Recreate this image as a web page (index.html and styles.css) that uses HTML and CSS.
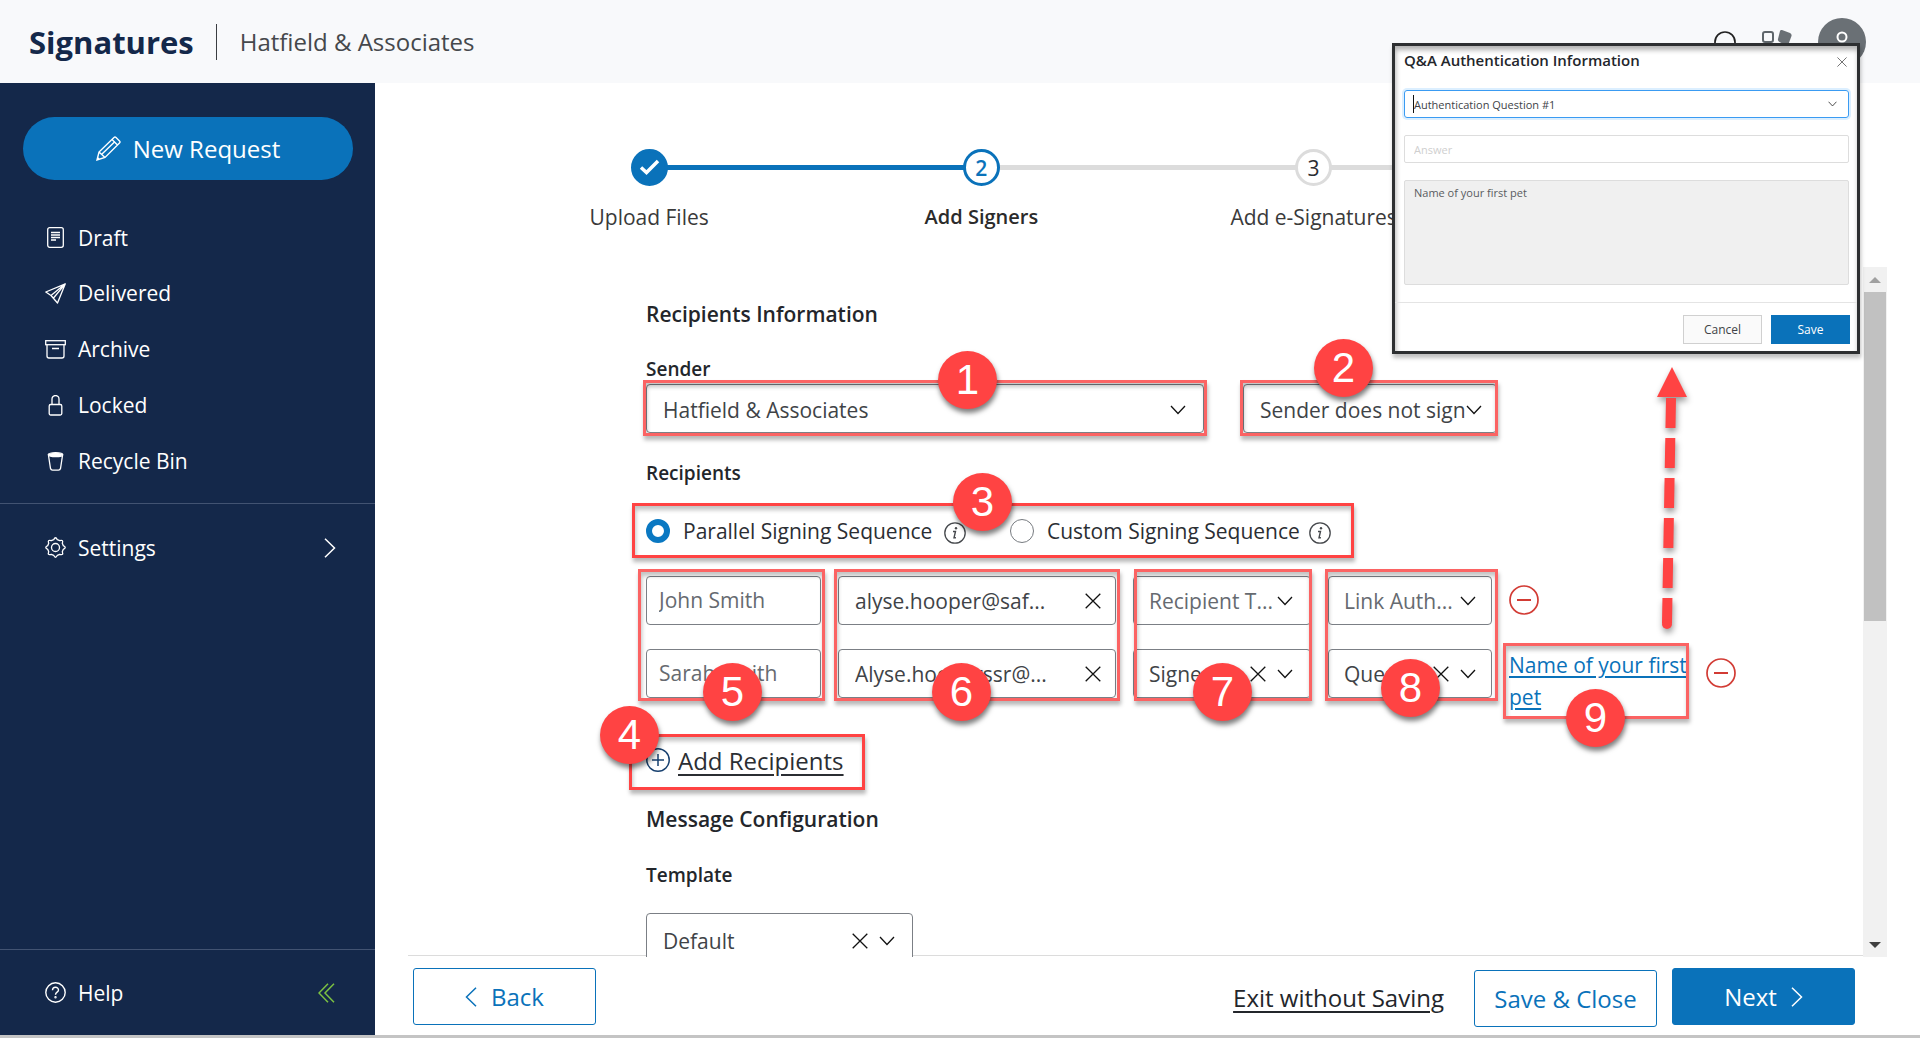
FILE: index.html
```
<!DOCTYPE html>
<html lang="en">
<head>
<meta charset="utf-8">
<title>Signatures - Add Signers</title>
<link rel="stylesheet" href="styles.css">
</head>
<body>
<svg class="defs" width="0" height="0" aria-hidden="true">
  <symbol id="chev" viewBox="0 0 16 10"><path d="M1 1l7 7.500 7-7.500" fill="none" stroke="currentColor" stroke-width="1.300"/></symbol>
  <symbol id="cross" viewBox="0 0 16 16"><path d="M.7.7l14.600 14.600M15.300.7L.7 15.300" fill="none" stroke="currentColor" stroke-width="1.300"/></symbol>
  <symbol id="info" viewBox="0 0 22 22"><circle cx="11" cy="11" r="10.200" fill="none" stroke="currentColor" stroke-width="1.300"/><circle cx="12" cy="6.200" r="1.200" fill="currentColor"/><path d="M9 9.500h2.500L10 15.800h1.900" fill="none" stroke="currentColor" stroke-width="1.400"/></symbol>
  <symbol id="minus" viewBox="0 0 30 30"><circle cx="15" cy="15" r="14" fill="none" stroke="currentColor" stroke-width="1.700"/><path d="M8 15h14" stroke="currentColor" stroke-width="2"/></symbol>
</svg>

<header class="topbar">
  <span class="brand">Signatures</span>
  <span class="account">Hatfield &amp; Associates</span>
  <div class="tools">
    <button class="tool" type="button" aria-label="Notifications"><svg width="24" height="22" viewBox="0 0 24 22" fill="none" stroke="#222" stroke-width="1.700"><path d="M2 18V11a10 10 0 0 1 20 0v7l2 3H0z"/></svg></button>
    <button class="tool" type="button" aria-label="Apps"><svg width="31" height="26" viewBox="0 0 31 26"><rect x="1" y="3" width="10" height="10" rx="2" fill="none" stroke="#5f666b" stroke-width="2"/><path d="M20 1l8 3q2 1 1.500 3l-3 8q-1 2-3 1l-6-3q-2-1-1.500-3l2-8q.5-1.500 2-1z" fill="#6a7075"/></svg></button>
    <button class="avatar" type="button" aria-label="Profile"><svg width="24" height="30" viewBox="0 0 24 30" fill="none" stroke="#fff" stroke-width="2"><circle cx="12" cy="10" r="4.500"/><path d="M3 27c0-12 18-12 18 0"/></svg></button>
  </div>
</header>

<div class="shell">
  <nav class="sidebar">
    <button class="new-request" type="button">
      <svg width="25" height="25" viewBox="0 0 25 25" fill="none" stroke="#fff" stroke-width="1.400"><path d="M1 24l2-8L18 1.500q1-1 2 0L23.500 5q1 1 0 2L9 21.500zM3 16l6 5.500M16 3.500l5.500 5.500M5.500 18.500L19 5.500M1.500 21.500l2 2"/></svg>
      New Request
    </button>
    <ul class="menu">
      <li><a href="#"><svg width="21" height="21" viewBox="0 0 21 21" fill="none" stroke="#fff" stroke-width="1.300"><rect x="2.700" y=".7" width="15.600" height="19.600" rx="2"/><path d="M6 5.500h9M6 8h9M6 10.500h9M6 13h5"/></svg>Draft</a></li>
      <li><a href="#"><svg width="21" height="21" viewBox="0 0 21 21" fill="none" stroke="#fff" stroke-width="1.300" stroke-linejoin="round"><path d="M20.300.8L.8 9l5.200 3.500 6.500 7.500zM20.300.8L6 12.500M20.300.8L8.500 15"/></svg>Delivered</a></li>
      <li><a href="#"><svg width="21" height="21" viewBox="0 0 21 21" fill="none" stroke="#fff" stroke-width="1.300"><rect x=".7" y="1.700" width="19.600" height="4"/><path d="M2 6v11q0 2 2 2h13q2 0 2-2V6M7 9.500h7"/></svg>Archive</a></li>
      <li><a href="#"><svg width="21" height="21" viewBox="0 0 21 21" fill="none" stroke="#fff" stroke-width="1.300"><rect x="4.200" y="9.500" width="12.600" height="10.500" rx="1.500"/><path d="M7 9.500V4a3.500 3.500 0 0 1 7 0v5.500"/></svg>Locked</a></li>
      <li><a href="#"><svg width="21" height="21" viewBox="0 0 21 21" fill="none" stroke="#fff" stroke-width="1.300"><ellipse cx="10.500" cy="3.700" rx="7.300" ry="2" fill="#fff"/><path d="M3.500 4.500l2 13q.4 1.600 2 1.600h6q1.600 0 2-1.600l2-13"/></svg>Recycle Bin</a></li>
    </ul>
    <ul class="menu menu-settings">
      <li><a href="#"><svg width="21" height="21" viewBox="0 0 21 21" fill="none" stroke="#fff" stroke-width="1.300" stroke-linejoin="round"><circle cx="10.500" cy="10.500" r="4"/><path d="M8.700 2.700Q10.500-1.200 12.300 2.700L14.700 3.700Q18.800 2.200 17.300 6.300L18.300 8.700Q22.200 10.500 18.300 12.300L17.300 14.700Q18.800 18.800 14.700 17.300L12.300 18.300Q10.500 22.200 8.700 18.300L6.300 17.300Q2.200 18.800 3.700 14.700L2.700 12.300Q-1.200 10.500 2.700 8.700L3.700 6.300Q2.200 2.200 6.300 3.700z"/></svg>Settings<svg class="end" width="12" height="20" viewBox="0 0 12 20" fill="none" stroke="#fff" stroke-width="1.500"><path d="M1 .7l9.500 9.300L1 19.300"/></svg></a></li>
    </ul>
    <div class="menu-help">
      <a href="#"><svg width="21" height="21" viewBox="0 0 21 21" fill="none" stroke="#fff" stroke-width="1.400"><circle cx="10.500" cy="10.500" r="9.700"/><path d="M7.500 8.300c0-4 6-4 6-.3 0 2.300-3 2-3 4.700"/><circle cx="10.500" cy="15.300" r=".5"/></svg>Help</a>
      <button type="button" class="collapse" aria-label="Collapse menu"><svg width="17" height="20" viewBox="0 0 17 20" fill="none" stroke="#7cc242" stroke-width="1.500"><path d="M10 .7L1 10l9 9.300M16 .7L7 10l9 9.300"/></svg></button>
    </div>
  </nav>

  <main class="main">
    <ol class="steps">
      <li class="step done"><span class="dot"><svg width="21" height="17" viewBox="0 0 21 17" fill="none" stroke="#fff" stroke-width="3.500"><path d="M2 8.500l5.500 5L19 2"/></svg></span><span class="label">Upload Files</span></li>
      <li class="step current"><span class="dot">2</span><span class="label">Add Signers</span></li>
      <li class="step"><span class="dot">3</span><span class="label">Add e-Signatures</span></li>
      <li class="step" aria-hidden="true"></li>
    </ol>

    <div class="scroller">
      <form class="form" id="request">
        <h2>Recipients Information</h2>
        <h3><label for="sender">Sender</label></h3>
        <div class="sender-row">
          <div class="field f-sender"><select id="sender"><option>Hatfield &amp; Associates</option></select><svg class="chev"><use href="#chev"/></svg></div>
          <div class="field f-sign"><select aria-label="Sender signing"><option>Sender does not sign</option></select><svg class="chev"><use href="#chev"/></svg></div>
        </div>
        <h3 class="recipients-title">Recipients</h3>
        <div class="sequence">
          <label class="choice"><input type="radio" name="seq" checked>Parallel Signing Sequence</label><svg class="info"><use href="#info"/></svg>
          <label class="choice second"><input type="radio" name="seq">Custom Signing Sequence</label><svg class="info"><use href="#info"/></svg>
        </div>
        <div class="recipient">
          <input class="field name" type="text" value="John Smith" aria-label="Recipient name">
          <div class="field email"><select aria-label="Recipient email"><option>alyse.hooper@saf...</option></select><button type="button" class="clear" aria-label="Clear"><svg><use href="#cross"/></svg></button></div>
          <div class="field type muted"><select aria-label="Recipient type"><option>Recipient T...</option></select><svg class="chev"><use href="#chev"/></svg></div>
          <div class="field auth muted"><select aria-label="Authentication"><option>Link Auth...</option></select><svg class="chev"><use href="#chev"/></svg></div>
          <button type="button" class="remove" aria-label="Remove recipient"><svg width="30" height="30"><use href="#minus"/></svg></button>
        </div>
        <div class="recipient">
          <input class="field name" type="text" value="Sarah Smith" aria-label="Recipient name">
          <div class="field email"><select aria-label="Recipient email"><option>Alyse.hooperssr@...</option></select><button type="button" class="clear" aria-label="Clear"><svg><use href="#cross"/></svg></button></div>
          <div class="field type"><select aria-label="Recipient type"><option>Signer</option></select><button type="button" class="clear" aria-label="Clear"><svg><use href="#cross"/></svg></button><svg class="chev"><use href="#chev"/></svg></div>
          <div class="field auth"><select aria-label="Authentication"><option>Quest...</option></select><button type="button" class="clear" aria-label="Clear"><svg><use href="#cross"/></svg></button><svg class="chev"><use href="#chev"/></svg></div>
          <a class="question" href="#">Name of your first pet</a>
          <button type="button" class="remove" aria-label="Remove recipient"><svg width="30" height="30"><use href="#minus"/></svg></button>
        </div>
        <button type="button" class="add"><svg width="24" height="24" viewBox="0 0 24 24" fill="none" stroke="#17406f" stroke-width="1.500"><circle cx="12" cy="12" r="11.200"/><path d="M6 12h12M12 6v12"/></svg><span>Add Recipients</span></button>
        <h2 class="message-title">Message Configuration</h2>
        <h3 class="template-title"><label for="template">Template</label></h3>
        <div class="field template"><select id="template"><option>Default</option></select><button type="button" class="clear" aria-label="Clear"><svg><use href="#cross"/></svg></button><svg class="chev"><use href="#chev"/></svg></div>
      </form>
      <div class="scrollbar" aria-hidden="true"><i class="up"></i><i class="thumb"></i><i class="down"></i></div>
    </div>

    <footer class="actions">
      <button class="btn" type="button"><svg width="12" height="20" viewBox="0 0 12 20"><path d="M11 .7L1.500 10l9.500 9.300"/></svg>Back</button>
      <a class="exit" href="#">Exit without Saving</a>
      <button class="btn low" type="button">Save &amp; Close</button>
      <button class="btn primary" type="button">Next<svg width="12" height="20" viewBox="0 0 12 20"><path d="M1 .7l9.500 9.300L1 19.300"/></svg></button>
    </footer>
  </main>
</div>

<div class="notes" aria-hidden="true">
  <div class="frame soft fr1"></div><div class="frame soft fr2"></div><div class="frame fr3"></div><div class="frame fr4"></div>
  <div class="frame soft fr5"></div><div class="frame soft fr6"></div><div class="frame soft fr7"></div><div class="frame soft fr8"></div><div class="frame soft fr9"></div>
  <svg class="arrow" width="40" height="272" viewBox="0 0 40 272"><path d="M22 0l15 30H7z" fill="#ff4343"/><path d="M21 31L17 256" fill="none" stroke="#ff4343" stroke-width="10" stroke-dasharray="30 10"/><circle cx="17" cy="257" r="5" fill="#ff4343"/></svg>
  <span class="badge b1">1</span><span class="badge b2">2</span><span class="badge b3">3</span><span class="badge b4">4</span><span class="badge b5">5</span><span class="badge b6">6</span><span class="badge b7">7</span><span class="badge b8">8</span><span class="badge b9">9</span>
</div>

<section class="dialog" role="dialog" aria-labelledby="qa-title">
  <header class="dialog-head"><h4 id="qa-title">Q&amp;A Authentication Information</h4><button type="button" aria-label="Close"><svg width="10" height="10"><use href="#cross"/></svg></button></header>
  <div class="dialog-body">
    <div class="q-select"><select aria-label="Authentication question"><option>Authentication Question #1</option></select><svg class="q-chev"><use href="#chev"/></svg></div>
    <input class="q-answer" type="text" placeholder="Answer" aria-label="Answer">
    <textarea class="q-text" aria-label="Question">Name of your first pet</textarea>
  </div>
  <footer class="dialog-foot"><button type="button" class="cancel">Cancel</button><button type="button" class="save">Save</button></footer>
</section>
</body>
</html>
```
FILE: styles.css
```
* { box-sizing: border-box; }
body {
  margin: 0;
  height: 100vh;
  display: flex;
  flex-direction: column;
  overflow: hidden;
  position: relative;
  border-bottom: 3px solid #c4c4c4;
  background: #fff;
  color: #2b2e33;
  font-family: "Open Sans", "Noto Sans", sans-serif;
  font-size: 21px;
}
button, input, select, textarea { font: inherit; color: inherit; margin: 0; }
button { background: none; border: 0; padding: 0; cursor: pointer; }
svg { display: block; flex: none; }
.defs { position: absolute; }
ul, ol { list-style: none; margin: 0; padding: 0; }

/* top bar */
.topbar { display: flex; align-items: center; height: 83px; padding: 0 54px 0 29px; background: #f8f9fb; flex: none; }
.brand { font-size: 31px; font-weight: 700; color: #14284a; padding-right: 22px; line-height: 36px; border-right: 1px solid #3a3d42; }
.account { font-size: 24px; color: #45484c; padding-left: 23px; }
.tools { margin-left: auto; display: flex; align-items: center; gap: 25px; }
.avatar { width: 48px; height: 48px; border-radius: 50%; background: #6a7075; display: flex; justify-content: center; align-items: center; }

.shell { display: flex; flex: 1; min-height: 0; }

/* sidebar */
.sidebar { width: 375px; flex: none; background: #14284a; color: #fff; display: flex; flex-direction: column; padding-top: 34px; }
.new-request { display: flex; align-items: center; justify-content: center; gap: 12px; height: 63px; margin: 0 22px 0 23px; border-radius: 32px; background: #0a72ba; font-size: 24px; }
.menu { padding-top: 30px; }
.menu a, .menu-help a { display: flex; align-items: center; gap: 12px; color: #fff; text-decoration: none; }
.menu a { height: 55px; padding: 0 39px 0 45px; }
.menu li + li a { height: 56px; }
.menu .end { margin-left: auto; }
.menu-settings { margin-top: 14px; padding-top: 16px; border-top: 1px solid #425372; }
.menu-help { display: flex; align-items: center; justify-content: space-between; margin-top: auto; height: 86px; padding: 0 40px 0 45px; border-top: 1px solid #425372; }

/* main column */
.main { flex: 1; min-width: 0; display: flex; flex-direction: column; padding: 0 33px; }
.steps { display: flex; margin: 0 75px; padding-top: 66px; height: 184px; }
.step { flex: 1; display: flex; flex-direction: column; align-items: center; gap: 17px; position: relative; }
.step:not(:last-child)::after { content: ""; position: absolute; left: 50%; top: 16px; width: 100%; height: 5px; background: #dcdcdc; }
.step.done::after { background: #0a72ba; }
.dot { position: relative; z-index: 1; width: 37px; height: 37px; border-radius: 50%; border: 3px solid #dcdcdc; background: #fff; display: flex; align-items: center; justify-content: center; flex: none; }
.done .dot { background: #0a72ba; border-color: #0a72ba; }
.current .dot { border-color: #0a72ba; color: #0a72ba; font-weight: 600; }
.label { line-height: 28px; white-space: nowrap; color: #3a3a3a; }
.current .label { font-weight: 600; font-size: 20px; color: #2b2b2b; }

.scroller { display: flex; justify-content: space-between; flex: 1; min-height: 0; overflow: hidden; position: relative; z-index: 1; margin-bottom: -2px; }
.form { padding: 32px 0 0 238px; }
h2, h3 { margin: 0; line-height: 30px; font-weight: 600; color: #23262b; }
h2 { font-size: 21px; }
h3 { font-size: 19px; }
h2 + h3 { margin-top: 25px; }
.field { display: flex; align-items: center; height: 49px; padding: 2px 17px 0 16px; border: 1px solid #7b7f85; border-radius: 4px; background: #fff; color: #404347; }
.field select { flex: 1; min-width: 0; height: 100%; appearance: none; border: 0; padding: 0; background: none; text-overflow: ellipsis; outline: 0; }
.chev { width: 16px; height: 10px; color: #111; }
.clear { margin-right: 11px; }
.clear svg { width: 16px; height: 16px; color: #111; }
.muted select { color: #666a70; }
.sender-row { display: flex; gap: 39px; }
.f-sender { width: 558px; }
.f-sign { width: 254px; padding-right: 14px; }
.field.f-sign select { text-overflow: clip; }
.recipients-title { margin-top: 25px; }
.sequence { display: flex; align-items: center; height: 48px; margin-top: 19px; }
.choice { display: flex; align-items: center; gap: 13px; width: 298px; white-space: nowrap; }
.choice.second { margin-left: 44px; width: 299px; }
.choice input { appearance: none; width: 24px; height: 24px; border: 1px solid #777b80; border-radius: 50%; background: #fff; flex: none; }
.choice input:checked { border: 6px solid #0a78c2; }
.info { width: 22px; height: 22px; color: #45484c; margin-top: 3px; }
.recipient { display: flex; align-items: center; gap: 17px; height: 64px; margin-top: 13px; }
.recipient + .recipient { margin-top: 9px; }
.name { width: 175px; padding: 0 12px; color: #666a70; }
.email { width: 278px; padding-right: 3px; }
.type { width: 178px; padding-left: 15px; }
.auth { width: 164px; padding-left: 15px; padding-right: 15px; }
.question { width: 180px; color: #0a72ba; line-height: 32px; text-underline-offset: 3px; align-self: flex-start; margin-top: 8px; }
.remove { color: #d23b34; }
.add { display: flex; align-items: center; gap: 8px; height: 32px; margin-top: 39px; font-size: 24px; text-decoration: underline; text-underline-offset: 4px; }
.message-title { margin-top: 28px; }
.template-title { margin-top: 26px; }
.template { width: 267px; margin-top: 23px; height: 54px; flex: none; }

.scrollbar { width: 24px; background: #f1f1f1; display: flex; flex-direction: column; align-items: center; padding: 10px 0 9px; }
.scrollbar i { flex: none; border: 6px solid transparent; border-top-width: 0; }
.scrollbar .up { border-bottom: 6px solid #a0a0a0; }
.scrollbar .thumb { width: 22px; height: 49%; border: 0; background: #c1c1c1; margin-top: 9px; }
.scrollbar .down { border-bottom-width: 0; border-top: 6px solid #404040; margin-top: auto; }

.actions { display: flex; align-items: flex-start; height: 80px; border-top: 1px solid #dcdcdc; padding: 12px 32px 0 5px; flex: none; }
.btn { display: flex; align-items: center; justify-content: center; gap: 14px; width: 183px; height: 57px; border: 1px solid #0a72ba; border-radius: 3px; color: #0a72ba; background: #fff; font-size: 24px; white-space: nowrap; }
.btn svg { fill: none; stroke: currentColor; stroke-width: 1.500; }
.btn.low { margin: 2px 15px 0 30px; }
.btn.primary { background: #0a72ba; color: #fff; }
.exit { margin-left: auto; line-height: 60px; font-size: 24px; color: #23262b; text-underline-offset: 4px; }

/* numbered call-outs over the form */
.notes { position: absolute; inset: 0; pointer-events: none; z-index: 2; }
.frame { position: absolute; border: 3px solid #ff4343; box-shadow: 1px 4px 4px rgba(0,0,0,.28), inset 1px 4px 4px rgba(0,0,0,.24); }
.frame.soft { border-color: #fb6363; }
.fr1 { left: 643px; top: 380px; width: 564px; height: 56px; }
.fr2 { left: 1240px; top: 380px; width: 258px; height: 56px; }
.fr3 { left: 632px; top: 503px; width: 722px; height: 55px; }
.fr4 { left: 629px; top: 734px; width: 236px; height: 56px; }
.fr5 { left: 638px; top: 569px; width: 187px; height: 132px; }
.fr6 { left: 834px; top: 569px; width: 286px; height: 132px; }
.fr7 { left: 1134px; top: 569px; width: 178px; height: 132px; }
.fr8 { left: 1325px; top: 569px; width: 173px; height: 132px; }
.fr9 { left: 1503px; top: 643px; width: 186px; height: 76px; }
.badge { position: absolute; width: 59px; height: 58px; border-radius: 50%; background: #ff4343; color: #fff; font: 42px/57px "Liberation Sans", Arial, sans-serif; text-align: center; box-shadow: 1px 4px 5px rgba(0,0,0,.5); }
.b1 { left: 938px; top: 351px; }
.b2 { left: 1314px; top: 339px; }
.b3 { left: 953px; top: 473px; }
.b4 { left: 600px; top: 706px; }
.b5 { left: 703px; top: 663px; }
.b6 { left: 932px; top: 663px; }
.b7 { left: 1193px; top: 663px; }
.b8 { left: 1381px; top: 659px; }
.b9 { left: 1566px; top: 689px; }
.arrow { position: absolute; left: 1650px; top: 367px; filter: drop-shadow(1px 4px 3px rgba(0,0,0,.4)); }

/* question dialog */
.dialog { position: absolute; left: 1392px; top: 43px; width: 468px; height: 311px; z-index: 3; display: flex; flex-direction: column; background: #fff; border: 3px solid #2d2f31; box-shadow: 1px 4px 4px rgba(0,0,0,.25), inset 1px 4px 5px rgba(0,0,0,.3); font-size: 11px; color: #404347; }
.dialog-head { display: flex; align-items: flex-start; justify-content: space-between; height: 32px; padding: 4px 10px 0 9px; }
.dialog-head h4 { margin: 0; font-size: 15px; line-height: 20px; font-weight: 600; color: #23262b; }
.dialog-head button { color: #555; margin-top: 7px; }
.dialog-body { display: flex; flex-direction: column; gap: 17px; padding: 12px 8px 0 9px; }
.q-select { display: flex; align-items: center; height: 28px; border: 1px solid #3a9bf2; border-radius: 3px; box-shadow: 0 0 0 2px #dcefff; padding: 0 11px 0 8px; }
.q-select select { flex: 1; height: 18px; appearance: none; border: 0; border-left: 1px solid #111; padding: 0; background: none; }
.q-chev { width: 9px; height: 6px; color: #111; }
.q-answer { height: 28px; border: 1px solid #ddd; border-radius: 2px; padding: 0 9px; }
.q-answer::placeholder { color: #cfcfcf; }
.q-text { height: 105px; border: 1px solid #ddd; border-radius: 2px; background: #f0f0f0; padding: 4px 9px; resize: none; color: #595c60; }
.dialog-foot { display: flex; justify-content: flex-end; gap: 9px; margin-top: auto; height: 49px; padding: 12px 7px 8px; border-top: 1px solid #e4e4e4; font-size: 12px; }
.dialog-foot button { width: 79px; height: 29px; }
.cancel { background: #fafafa; border: 1px solid #d0d0d0; }
.save { background: #0a72ba; color: #fff; }
```
